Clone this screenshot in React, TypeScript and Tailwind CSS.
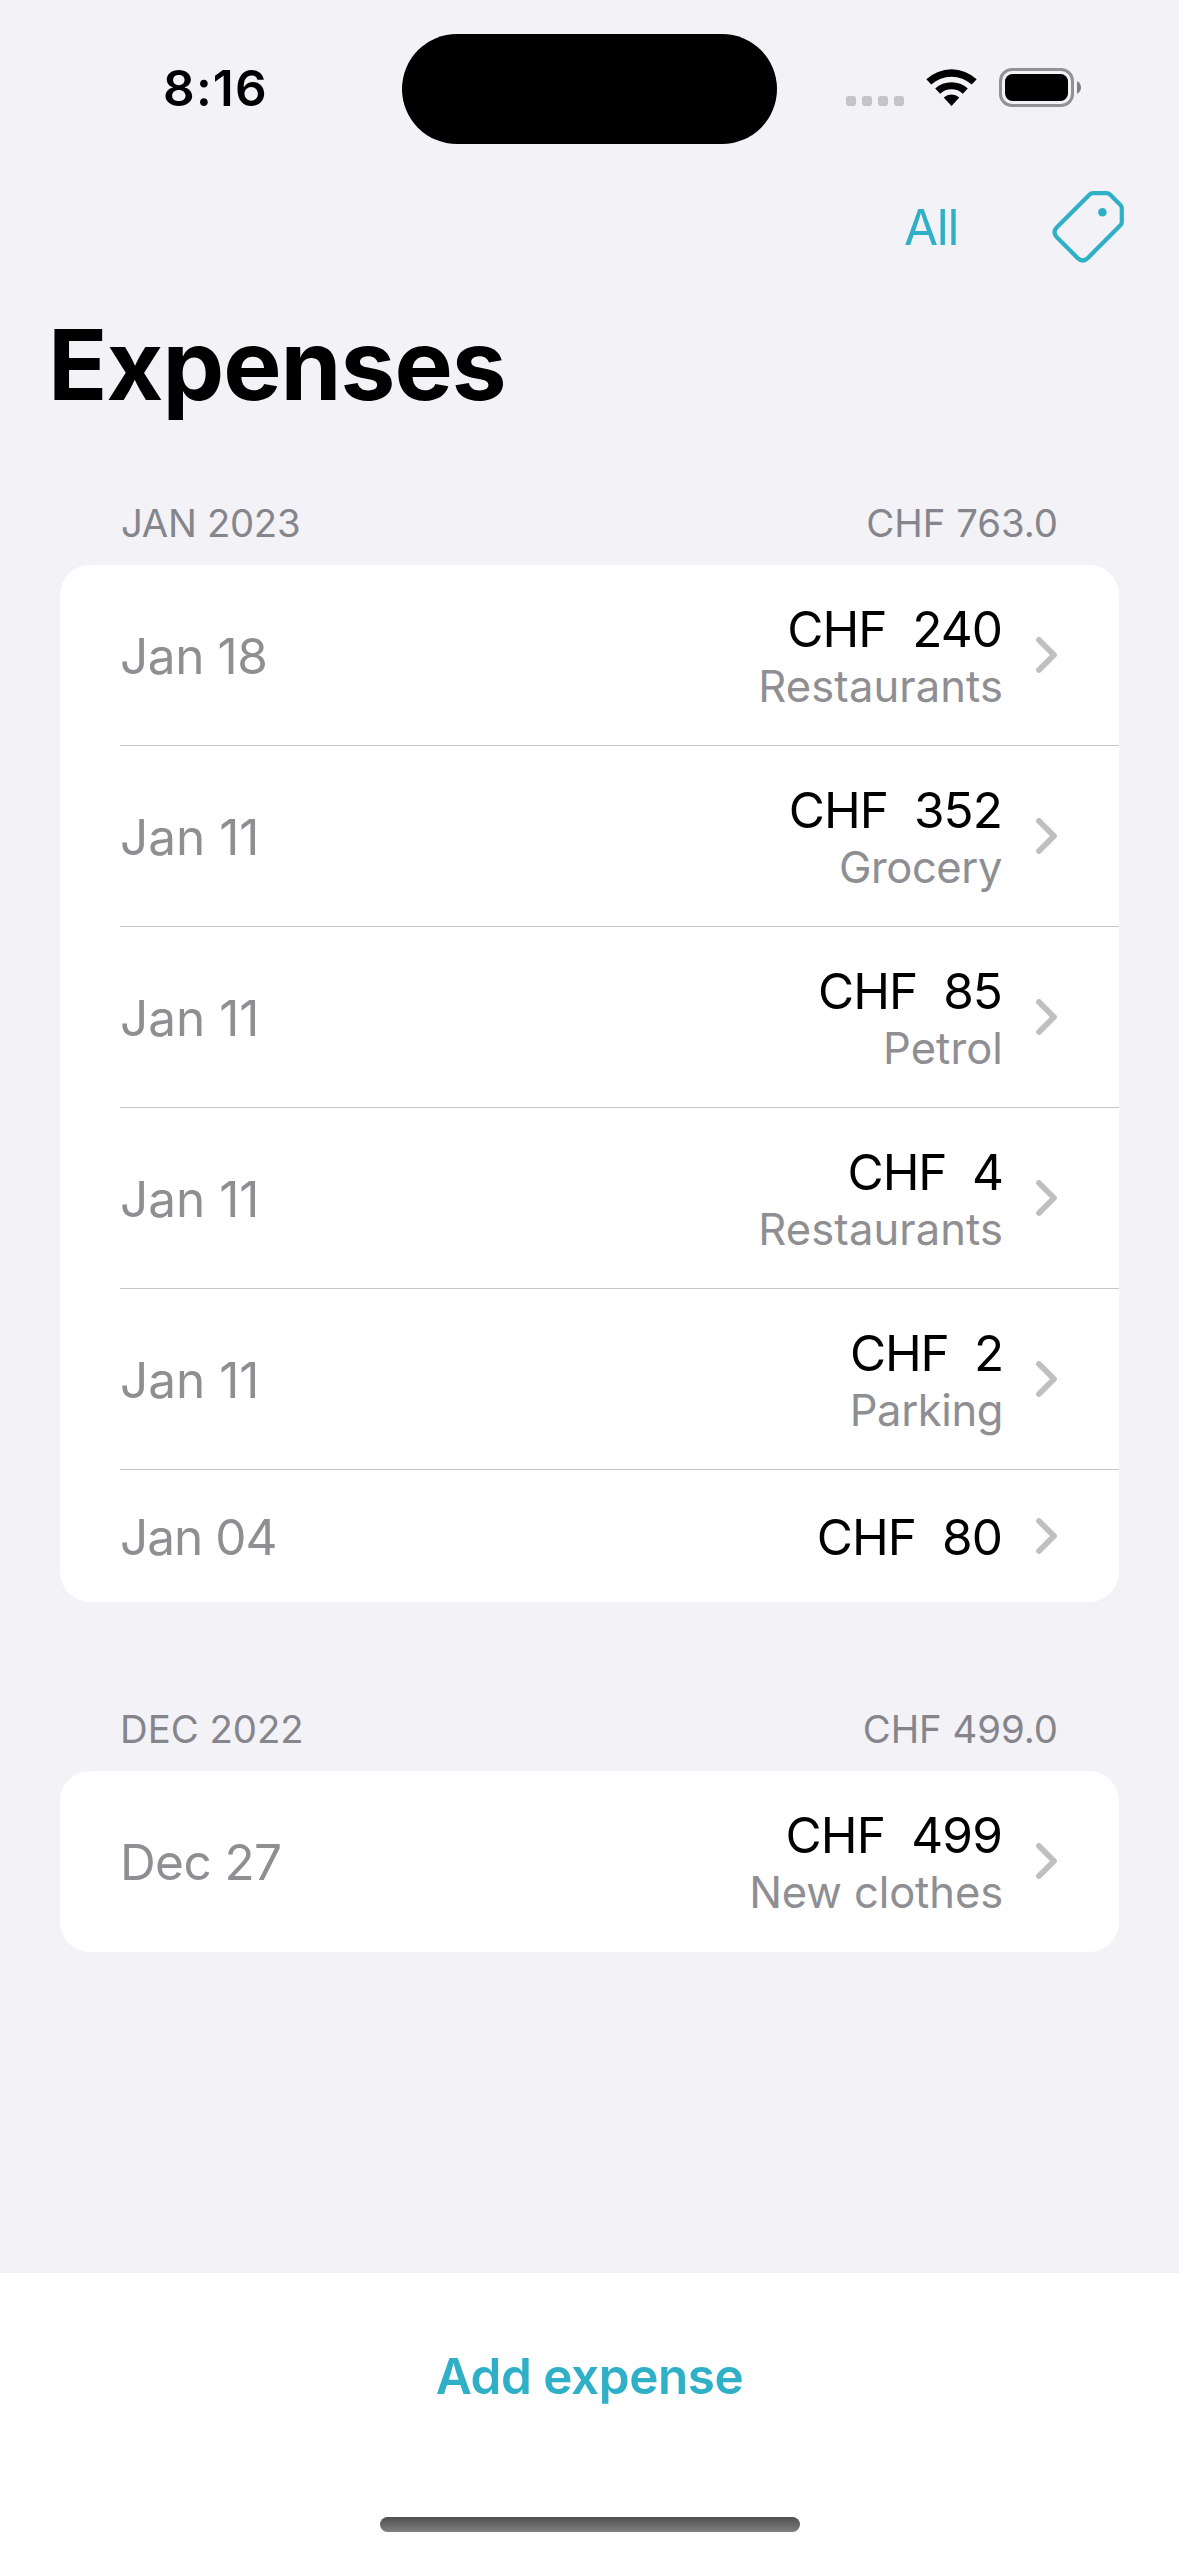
type Expense = {
  date: string;
  dateClass: string;
  amount: string;
  amountClass: string;
  category?: string;
  categoryClass?: string;
};

type Section = {
  title: string;
  titleClass: string;
  total: string;
  expenses: Expense[];
};

const sections: Section[] = [
  {
    title: 'JAN 2023',
    titleClass: 'pl-px tracking-[-0.3px]',
    total: 'CHF 763.0',
    expenses: [
      { date: 'Jan 18', dateClass: 'tracking-[-0.4px]', amount: '240', amountClass: 'pr-px tracking-[-1px]', category: 'Restaurants', categoryClass: 'tracking-[0.1px]' },
      { date: 'Jan 11', dateClass: 'tracking-[0px]', amount: '352', amountClass: 'pr-px tracking-[-0.95px]', category: 'Grocery', categoryClass: 'pr-px tracking-[-0.4px]' },
      { date: 'Jan 11', dateClass: 'tracking-[0px]', amount: '85', amountClass: 'pr-px tracking-[-0.95px]', category: 'Petrol', categoryClass: 'tracking-[0.1px]' },
      { date: 'Jan 11', dateClass: 'tracking-[0px]', amount: '4', amountClass: 'tracking-[-1.1px]', category: 'Restaurants', categoryClass: 'tracking-[0.1px]' },
      { date: 'Jan 11', dateClass: 'tracking-[0px]', amount: '2', amountClass: 'tracking-[-1.2px]', category: 'Parking', categoryClass: 'tracking-[-0.4px]' },
      { date: 'Jan 04', dateClass: 'tracking-[-1px]', amount: '80', amountClass: 'pr-px tracking-[-0.95px]' },
    ],
  },
  {
    title: 'DEC 2022',
    titleClass: 'tracking-[0px]',
    total: 'CHF 499.0',
    expenses: [
      { date: 'Dec 27', dateClass: 'tracking-[-0.6px]', amount: '499', amountClass: 'pr-px tracking-[-0.85px]', category: 'New clothes', categoryClass: 'tracking-[-0.1px]' },
    ],
  },
];

function WifiIcon() {
  return (
    <svg className="ml-[22px] h-[37px] w-[51px]" viewBox="0 0 51 37" fill="#000">
      <path d="M0.3 10.3A36.9 36.9 0 0 1 50.7 10.3L45.7 15.6A29.6 29.6 0 0 0 5.3 15.6Z" />
      <path d="M9.2 19.6A23.8 23.8 0 0 1 41.8 19.6L36.8 24.8A16.6 16.6 0 0 0 14.2 24.8Z" />
      <path d="M17.7 28.5A11.6 11.6 0 0 1 33.3 28.5L25.5 37Z" />
    </svg>
  );
}

function BatteryIcon() {
  return (
    <svg className="ml-[22px] h-[39px] w-[82px]" viewBox="0 0 82 39">
      <rect x="1.5" y="1.5" width="72" height="36" rx="11.5" fill="none" stroke="#929295" strokeWidth="3" />
      <rect x="6" y="6" width="63" height="27" rx="7.5" fill="#000" />
      <path d="M78 13.2C80.6 14.3 82 16.8 82 19.5S80.6 24.7 78 25.8Z" fill="#808083" />
    </svg>
  );
}

function TagIcon() {
  return (
    <svg className="h-[72px] w-[72px]" viewBox="0 0 72 72" fill="none">
      <path
        d="M41.2 2.2H54.6Q56.6 2.2 58 3.6L68.2 13.8Q69.8 15.4 69.8 17.4V30.8Q69.8 33 68.2 34.6L35.9 66.9Q30.7 72 25.5 66.9L5.1 46.4Q-0.1 41.2 5.1 36L37.4 3.8Q39 2.2 41.2 2.2Z"
        stroke="#30b0c7"
        strokeWidth="4.2"
      />
      <circle cx="50.4" cy="21.3" r="4.3" fill="#30b0c7" />
    </svg>
  );
}

function Chevron() {
  return (
    <svg className="-mt-[2px] h-[36px] w-[22px]" viewBox="0 0 22 36" fill="none">
      <path d="M3 3L18 18L3 33" stroke="#bfbfbf" strokeWidth="5.8" strokeLinecap="round" strokeLinejoin="round" />
    </svg>
  );
}

function ExpenseRow({ expense, last }: { expense: Expense; last: boolean }) {
  const height = expense.category ? 'h-[181px]' : 'h-[132px]';
  const edge = last ? (expense.category ? 'pb-px' : '') : 'border-b border-[#c6c6c8]';
  return (
    <li className={`ml-[60px] flex items-center pr-[61px] pt-[2px] ${height} ${edge}`}>
      <span className={`text-[49.5px] leading-[60px] text-[#8e8e93] ${expense.dateClass}`}>{expense.date}</span>
      <div className="mr-[33px] ml-auto flex flex-col items-end">
        <span className={`text-[49.5px] leading-[60px] whitespace-pre text-black ${expense.amountClass}`}>
          {`CHF  ${expense.amount}`}
        </span>
        {expense.category && (
          <span className={`text-[43.5px] leading-[54px] text-[#8e8e93] ${expense.categoryClass}`}>{expense.category}</span>
        )}
      </div>
      <Chevron />
    </li>
  );
}

export default function App() {
  return (
    <div className="flex h-[2556px] w-[1179px] flex-col overflow-hidden bg-[#f2f2f7] font-[Inter,sans-serif]">
      <div className="flex h-[177px] shrink-0 items-start">
        <div className="mt-[58px] w-[402px] pl-[163px] text-[49.5px] leading-[60px] font-semibold tracking-[1.2px] text-black">8:16</div>
        <div className="mt-[34px] h-[110px] w-[375px] rounded-full bg-black" />
        <div className="mt-[68px] ml-[69px] flex h-[39px] items-center">
          <div className="mt-[27px] flex gap-[6px]">
            <i className="size-[10px] rounded-[3px] bg-[#c3c3c8]" />
            <i className="size-[10px] rounded-[3px] bg-[#c3c3c8]" />
            <i className="size-[10px] rounded-[3px] bg-[#c3c3c8]" />
            <i className="size-[10px] rounded-[3px] bg-[#c3c3c8]" />
          </div>
          <WifiIcon />
          <BatteryIcon />
        </div>
      </div>

      <nav className="flex h-[100px] shrink-0 items-center justify-end pr-[55px]">
        <button className="mr-[94px] text-[49.5px] leading-[60px] tracking-[-1.4px] text-[#30b0c7]">All</button>
        <button>
          <TagIcon />
        </button>
      </nav>

      <h1 className="mb-[29px] shrink-0 pl-[48px] text-[98px] leading-[176px] font-bold tracking-[-1px] text-black">Expenses</h1>

      <main className="flex flex-1 flex-col gap-[86px] px-[60px]">
        {sections.map((section) => (
          <section key={section.title}>
            <header className="flex h-[83px] items-center justify-between pr-[61px] pb-[2px] pl-[60px] text-[38.3px] leading-[46px] text-[#85858b]">
              <h2 className={section.titleClass}>{section.title}</h2>
              <span>{section.total}</span>
            </header>
            <ul className="overflow-hidden rounded-[30px] bg-white">
              {section.expenses.map((expense, i) => (
                <ExpenseRow key={i} expense={expense} last={i === section.expenses.length - 1} />
              ))}
            </ul>
          </section>
        ))}
      </main>

      <footer className="flex h-[283px] shrink-0 flex-col items-center bg-white">
        <button className="mt-[73px] text-[49.5px] leading-[60px] font-semibold tracking-[-0.5px] text-[#30b0c7]">Add expense</button>
        <div className="mt-[111px] ml-px h-[15px] w-[420px] rounded-full bg-linear-to-b from-[#4f4f4f] to-[#808080]" />
      </footer>
    </div>
  );
}
